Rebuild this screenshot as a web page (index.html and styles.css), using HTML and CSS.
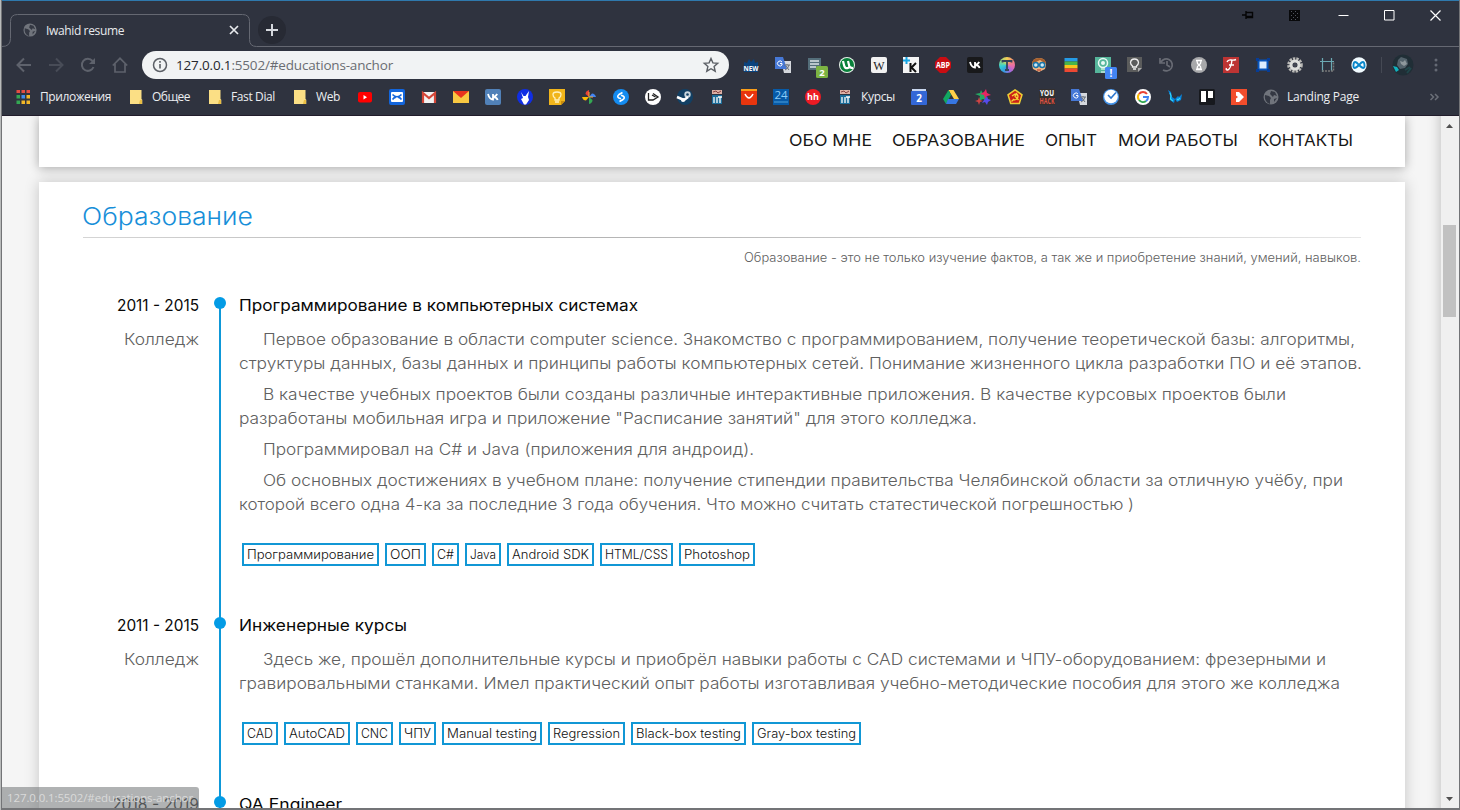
FILE: index.html
```html
<!DOCTYPE html>
<html lang="ru">
<head>
<meta charset="utf-8">
<title>Iwahid resume</title>
<link rel="stylesheet" href="styles.css">
</head>
<body>
<div class="window">
  <header class="chrome">
    <div class="tabstrip">
      <svg class="tabline" width="1457" height="46" viewBox="0 0 1457 46" fill="none" stroke="#656872"><path d="M0 45.500q8.500 0 8.500-8v-17q0-7 7-7h225q7 0 7 7v18q0 7 7 7h1202.500"/></svg>
      <div class="tab">
        <svg width="14" height="14" viewBox="0 0 16 16"><use href="#globe"/></svg>
        <span class="tab-title" data-w="78">Iwahid resume</span>
        <svg width="10" height="10" viewBox="0 0 10 10" stroke="#e8eaed" stroke-width="1.700"><path d="M1 1l8 8M9 1l-8 8"/></svg>
      </div>
      <div class="newtab"><svg width="14" height="14" viewBox="0 0 14 14" stroke="#d5d8dd" stroke-width="2"><path d="M7 1v12M1 7h12"/></svg></div>
      <div class="controls">
        <svg width="12" height="12" viewBox="0 0 12 12" fill="none" stroke="#050506" stroke-width="1.400"><path d="M0 6h4M4 2v8M4 3.500h6.500v5H4M4 7.500h7"/></svg>
        <svg class="grid-icon" width="11" height="11" viewBox="0 0 11 11"><path fill="#08090b" d="M0 0h11v11H0z"/><path d="M2.500 1v9M6.500 1v9" stroke="#50545e" stroke-dasharray="1 3"/><path d="M4.500 3v7M8.500 3v7" stroke="#50545e" stroke-dasharray="1 3"/></svg>
        <svg width="11" height="11" viewBox="0 0 11 11" stroke="#fff"><path d="M.5 5.500h10"/></svg>
        <svg width="11" height="11" viewBox="0 0 11 11" fill="none" stroke="#fff"><path d="M.5.5h9.500v9.500H.5z"/></svg>
        <svg width="11" height="11" viewBox="0 0 11 11" stroke="#fff" stroke-width="1.200"><path d="M.5.5l10 10M10.500.5l-10 10"/></svg>
      </div>
    </div>

    <div class="toolbar">
      <nav class="navbuttons">
        <svg width="16" height="16" viewBox="0 0 16 16" fill="none" stroke="#5e626c" stroke-width="2"><path d="M15 8H2M8 1.500L1.500 8 8 14.500"/></svg>
        <svg width="16" height="16" viewBox="0 0 16 16" fill="none" stroke="#484c57" stroke-width="2"><path d="M1 8h13M8 1.500L14.500 8 8 14.500"/></svg>
        <svg width="16" height="16" viewBox="0 0 16 16" fill="none" stroke="#5e626c" stroke-width="2"><path d="M13.500 10A6 6 0 1 1 12.500 4"/><path d="M15 1v6H9z" fill="#5e626c" stroke="none"/></svg>
        <svg width="16" height="16" viewBox="0 0 16 16" fill="none" stroke="#5e626c" stroke-width="1.700"><path d="M.8 8.500L8 1.300l7.200 7.200M3 7v8h10V7"/></svg>
      </nav>
      <div class="omnibox">
        <svg width="16" height="16" viewBox="0 0 16 16"><circle cx="8" cy="8" r="6.500" fill="none" stroke="#5b5f65" stroke-width="1.500"/><path d="M8 7v4.500M8 4v1.700" stroke="#5b5f65" stroke-width="1.600"/></svg>
        <span class="url" data-w="217"><b>127.0.0.1</b>:5502/#educations-anchor</span>
        <svg width="16" height="16" viewBox="0 0 16 16" fill="none" stroke="#5b5f65" stroke-width="1.400"><path d="M8 1.500l1.900 4.400 4.800.4-3.600 3.200 1.100 4.700L8 11.700l-4.200 2.500 1.100-4.700L1.300 6.300l4.800-.4z"/></svg>
      </div>
      <div class="extensions">
        <svg viewBox="0 0 16 16"><path d="M1 10V5l3 1 2-4 2 3 3-3 1 4 3-1v10H1z" fill="#0b437e"/><text x="8" y="14" font-size="7.500" textLength="15" lengthAdjust="spacingAndGlyphs" class="mini">NEW</text></svg>
        <svg viewBox="0 0 16 16"><use href="#translate"/></svg>
        <svg viewBox="0 0 16 16"><path d="M1 1h13v12H1z" fill="#546e7a"/><path d="M3 4h9M3 7h9M3 10h6" stroke="#dce4e7" stroke-width="1.300"/><rect x="9" y="9" width="12" height="12" rx="1.500" fill="#7cb342"/><text x="15" y="18.500" font-size="9.500" class="mini">2</text></svg>
        <svg viewBox="0 0 16 16"><circle cx="8" cy="8" r="8" fill="#e7f4ea"/><circle cx="8" cy="8" r="7" fill="#08813a"/><path d="M4 4l1 4q.7 4 4 3 2-.7 1-3L9 4M10 9q1 2 4 2" fill="none" stroke="#fff" stroke-width="2.200"/></svg>
        <svg viewBox="0 0 16 16"><rect width="16" height="16" rx="2" fill="#f1f1f1"/><text x="8" y="12.500" font-size="12" class="serif">W</text></svg>
        <svg viewBox="0 0 16 16"><path d="M0 0h16v16H0z" fill="#f4f4f4"/><path d="M0 3.500h7M3.500 0v7" stroke="#17a6e3" stroke-width="2"/><path d="M7.500 6v9M13 6l-4.500 4.500L13 15" fill="none" stroke="#111" stroke-width="2"/></svg>
        <svg viewBox="0 0 16 16"><path d="M5 0h6l5 5v6l-5 5H5l-5-5V5z" fill="#c90d12"/><text x="8" y="11" font-size="8" textLength="14" lengthAdjust="spacingAndGlyphs" class="mini">ABP</text></svg>
        <svg viewBox="0 0 16 16"><rect width="16" height="16" rx="2" fill="#18191b"/><use href="#vk"/></svg>
        <div class="disc"><svg viewBox="0 0 16 16"><path d="M3.500 5.500V4h9v1.500M8 4v9M6 13h4" stroke="#34445a" stroke-width="1.800" fill="none"/></svg></div>
        <svg viewBox="0 0 16 16"><path d="M1 8Q1 1 8 1t7 7l-1 4-6 3-6-3z" fill="#f1b883"/><path d="M1 7Q1 1 8 1t7 6L9 3z" fill="#a55f2d"/><g fill="#cce9f5" stroke="#1975a9" stroke-width="1.500"><circle cx="4.800" cy="8" r="2.500"/><circle cx="11.200" cy="8" r="2.500"/></g><path d="M6 13h4" stroke="#b62820"/></svg>
        <svg viewBox="0 0 16 16"><path fill="#259be6" d="M1.500 1h13v3.500h-13z"/><path fill="#48b549" d="M1.500 4.500h13V8h-13z"/><path fill="#f9c51b" d="M1.500 8h13v3.500h-13z"/><path fill="#ed4833" d="M1.500 11.500h13V15h-13z"/></svg>
        <svg viewBox="0 0 16 16"><path d="M0 0h16v16H0z" fill="#56b69b"/><circle cx="8" cy="6" r="4.500" fill="none" stroke="#e9faf5" stroke-width="1.500"/><circle cx="8" cy="6" r="2" fill="#e9faf5"/><path d="M6 12h4M6 15h4" stroke="#fff"/><rect x="10" y="10" width="12" height="12" rx="1.500" fill="#4285f4"/><text x="16" y="19.500" font-size="10" class="mini">!</text></svg>
        <svg viewBox="0 0 16 16"><path d="M0 0h15v11l-4 4H0z" fill="#5b5c5c"/><path d="M11 15v-4h4z" fill="#aaa"/><path d="M5.500 10V9q-2-1.500-2-3.500Q4 2 7.500 2T11.500 5.500q0 2-2 3.500v1zM6 12h3" fill="none" stroke="#eee" stroke-width="1.300"/></svg>
        <svg viewBox="0 0 16 16" fill="none" stroke="#686b74" stroke-width="1.700"><path d="M2 5A6 6 0 1 1 4 13M8 4v4l3 2M1 1v5h5"/></svg>
        <svg viewBox="0 0 16 16"><circle cx="8" cy="8" r="8" fill="#a8a9ab"/><path d="M5 3.500h6M5 12.500h6M6 4q0 3 2 4-2 1-2 4h4q0-3-2-4 2-1 2-4" fill="none" stroke="#fff" stroke-width="1.300"/></svg>
        <svg viewBox="0 0 16 16"><path d="M0 0h16v16H0z" fill="#bd3433"/><path d="M4 5q1-2.500 4-2t5-.5M9 3q-1 9-4.500 10-2 0-1-2M6 8h5" stroke="#fff" stroke-width="1.400" fill="none"/></svg>
        <svg viewBox="0 0 16 16"><path d="M3.500 3.500h9v9h-9z" fill="#dcecff" stroke="#0755bd" stroke-width="2"/><g fill="#063c96"><path d="M1 1h3v3H1zM12 1h3v3h-3zM1 12h3v3H1zM12 12h3v3h-3z"/></g></svg>
        <svg viewBox="0 0 16 16"><circle cx="8" cy="8" r="6" fill="none" stroke="#b9b9b6" stroke-width="3.600" stroke-dasharray="2.200 1"/><circle cx="8" cy="8" r="4" fill="none" stroke="#dededb" stroke-width="3"/><circle cx="8" cy="8" r="2" fill="#454853"/></svg>
        <svg viewBox="0 0 16 16"><path d="M3.500 1v14M12.500 1v13M1 4.500h14" fill="none" stroke="#6ba9b3" stroke-width="1.200"/><path d="M3 14h11.500V5" stroke="#777" stroke-width="1.500" stroke-dasharray="2 1" fill="none"/></svg>
        <svg viewBox="0 0 16 16"><circle cx="8" cy="8" r="7.700" fill="#f2fbff"/><path d="M8 8q-5-6-5.500 0t5.500 0q5-6 5.500 0T8 8" fill="none" stroke="#0886ca" stroke-width="1.900"/></svg>
      </div>
      <div class="profile"><svg width="22" height="22" viewBox="0 0 22 22"><circle cx="11" cy="11" r="10.500" fill="#202e36"/><path d="M6 6l3-3 6 2 1 5-3 4-5 1-3-4z" fill="#53626b"/><path d="M8 7l3 1 2-2 2 4-3 2-3-2z" fill="#8e989c"/><path d="M1 12l4 1 2 3-3 2z" fill="#10b2bf"/><path d="M13 16l5-3M15 19l4-5" stroke="#20474b" stroke-width="2"/></svg></div>
      <svg class="kebab" width="4" height="14" viewBox="0 0 4 14" fill="#656974"><circle cx="2" cy="2" r="1.500"/><circle cx="2" cy="7" r="1.500"/><circle cx="2" cy="12" r="1.500"/></svg>
    </div>

    <div class="bookmarks">
      <svg viewBox="0 0 16 16"><path fill="#e54d42" d="M1.500 1h3.500v3H1.500zM6.500 1h3.500v3H6.500zM11.500 1h3.500v3h-3.500z"/><path fill="#34a853" d="M1.500 6h3.500v3.500H1.500zM1.500 11.500h3.500v3.500H1.500z"/><path fill="#408bee" d="M6.500 6h3.500v3.500H6.500z"/><path fill="#f2b728" d="M11.500 6h3.500v3.500h-3.500zM6.500 11.500h3.500v3.500H6.500zM11.500 11.500h3.500v3.500h-3.500z"/></svg>
      <span class="bm w71" data-w="71">Приложения</span>
      <svg viewBox="0 0 16 16"><use href="#folder"/></svg><span class="bm w38" data-w="38">Общее</span>
      <svg viewBox="0 0 16 16"><use href="#folder"/></svg><span class="bm w44" data-w="44">Fast Dial</span>
      <svg viewBox="0 0 16 16"><use href="#folder"/></svg><span class="bm w24" data-w="24">Web</span>
      <div class="icon-run">
        <svg viewBox="0 0 16 16"><rect x="1" y="3" width="14" height="10.500" rx="2" fill="#f00"/><path d="M6.500 6v4.500l3.500-2.200z" fill="#fff"/></svg>
        <svg viewBox="0 0 16 16"><rect width="16" height="16" rx="2" fill="#1265dc"/><rect x="2" y="3" width="12" height="10" rx="1" fill="#fff"/><path d="M3.500 5.500q4.500 4.500 9 0M3.500 10.500q2-2.500 3.500-2M12.500 10.500q-2-2.500-3.500-2" fill="none" stroke="#1265dc" stroke-width="1.600"/></svg>
        <svg viewBox="0 0 16 16"><path d="M1 3h14v11H1z" fill="#f2f2f2"/><path d="M2 14V4l6 5 6-5v10" fill="none" stroke="#d44638" stroke-width="2.200"/></svg>
        <svg viewBox="0 0 16 16"><path d="M0 2h16v12H0z" fill="#f8c842"/><path d="M0 2h16L8 9z" fill="#e7321e"/></svg>
        <svg viewBox="0 0 16 16"><rect width="16" height="16" rx="2" fill="#5181b8"/><use href="#vk"/></svg>
        <svg viewBox="0 0 16 16"><circle cx="8" cy="8" r="8" fill="#102ee4"/><path d="M4 3l2.500 4h2L12 2l-1 6 1 3-3 4.500H7L4 10l2-1z" fill="#fff"/></svg>
        <svg viewBox="0 0 16 16"><path d="M0 0h16v12l-4 4H0z" fill="#f1b51b"/><path d="M12 16v-4h4z" fill="#c98b0c"/><path d="M6 11V9Q4 8 4 5.500T8 3t4 2.500T10 9v2zM6 13h4" fill="none" stroke="#fff1bd" stroke-width="1.300"/></svg>
        <svg viewBox="0 0 16 16"><path d="M8 8V1q-3.500 1-3.500 4z" fill="#e94335"/><path d="M8 8h7q-1-3.500-4-3.500z" fill="#4285f4"/><path d="M8 8v7q3.500-1 3.500-4z" fill="#34a853"/><path d="M8 8H1q1 3.500 4 3.500z" fill="#fbbc05"/><path d="M8 3v5h4" fill="none" stroke="#f5a93b"/></svg>
        <svg viewBox="0 0 16 16"><circle cx="8" cy="8" r="8" fill="#148cf1"/><path d="M9.500 3.500L6 5.500Q3.500 7.500 6 9l2 .8M6.500 12.500l3.500-2Q12.500 8.500 10 7L8 6.200" fill="none" stroke="#fff" stroke-width="1.600"/></svg>
        <svg viewBox="0 0 16 16"><circle cx="8" cy="8" r="8" fill="#fff"/><path d="M3.500 4v7H8l5-3-5-3.500M7 6l3.500 2" fill="none" stroke="#222" stroke-width="1.300"/></svg>
        <svg viewBox="0 0 16 16"><circle cx="8" cy="8" r="8" fill="#124064"/><circle cx="10.500" cy="5.500" r="3.200" fill="#c9d5dd"/><circle cx="10.500" cy="5.500" r="1.300" fill="#124064"/><path d="M0 8l7 3 4-3" fill="none" stroke="#fff" stroke-width="2.500"/><circle cx="6" cy="11" r="2" fill="#fff"/></svg>
        <svg viewBox="0 0 16 16"><use href="#iit"/></svg>
        <svg viewBox="0 0 16 16"><rect width="16" height="16" rx="1.500" fill="#e8350e"/><path d="M0 0h16v2H0z" fill="#fb9e19"/><path d="M4 5q4 8 8 0" fill="none" stroke="#fff" stroke-width="1.500"/></svg>
        <svg viewBox="0 0 16 16"><path d="M0 0h16v16H0z" fill="#075aa7"/><text x="8" y="10" font-size="11.500" class="mini light">24</text><path d="M1 13h14" stroke="#4fa0db"/></svg>
        <svg viewBox="0 0 16 16"><circle cx="8" cy="8" r="8" fill="#ed1b24"/><text x="8" y="11.300" font-size="9" class="mini">hh</text></svg>
        <svg viewBox="0 0 16 16"><use href="#iit"/></svg>
      </div>
      <span class="bm w34" data-w="34">Курсы</span>
      <div class="icon-run">
        <svg viewBox="0 0 16 16"><path d="M1 0h14v3H1z" fill="#c9d7ef"/><rect y="2" width="16" height="14" rx="1" fill="#3367d6"/><text x="8" y="13" font-size="10" class="mini">2</text></svg>
        <svg viewBox="0 0 16 16"><path d="M5.500 1h5L16 10h-5z" fill="#ffcf48"/><path d="M5.500 1L8 6l-5 9-3-5z" fill="#11a861"/><path d="M5 10h11l-3 5H3z" fill="#3777e3"/></svg>
        <svg viewBox="0 0 16 16"><path d="M6 1l2 4 5-1-3 4 2 4-4-2-4 2 1-5-5-2 5-1z" fill="#24aa63"/><path d="M11 0l1 4 4 2-4 1-2 3-1-4-4-1 4-2z" fill="#e72662"/><path d="M12 7l1 3 3 1-3 2-1 3-2-3-3 1 2-3z" fill="#554bea"/><path d="M4 8l1 3 3 1-3 1-1 3-1-3-3-1 3-1z" fill="#d04444"/></svg>
        <svg viewBox="0 0 16 16"><path d="M8 .8l7 5-2.700 8.700H3.700L1 5.800z" fill="#cc2017" stroke="#edcf34" stroke-width="1.500"/><path d="M4.500 12.500l2-2M5 7l3-2 1 1-1 1 3.500 4M9 4q4 4 0 6.500-2 .8-3-.5" fill="none" stroke="#f8d637" stroke-width="1.300"/></svg>
        <svg viewBox="0 0 16 16"><path d="M0 0h16v16H0z" fill="#34302f"/><text x="8" y="7" font-size="8" textLength="14" lengthAdjust="spacingAndGlyphs" class="mini">YOU</text><text x="8" y="15" font-size="8" textLength="15" lengthAdjust="spacingAndGlyphs" class="mini red">HACK</text></svg>
        <svg viewBox="0 0 16 16"><use href="#translate"/></svg>
        <svg viewBox="0 0 16 16"><circle cx="8" cy="8" r="8" fill="#4594e9"/><circle cx="8" cy="7.500" r="6.800" fill="#fff"/><path d="M5 6l3 3 5-5.500" fill="none" stroke="#2c77cf" stroke-width="1.600"/></svg>
        <svg viewBox="0 0 16 16"><circle cx="8" cy="8" r="8" fill="#fff"/><path d="M12 5A5 5 0 0 0 4 5" fill="none" stroke="#ea4335" stroke-width="2"/><path d="M4 5a5 5 0 0 0 0 6" fill="none" stroke="#fbbc05" stroke-width="2"/><path d="M4 11a5 5 0 0 0 7 1" fill="none" stroke="#34a853" stroke-width="2"/><path d="M8 8h5q0 3-2 4" fill="none" stroke="#4285f4" stroke-width="2"/></svg>
        <svg viewBox="0 0 16 16"><path d="M1 1l3 2 1 5 3 2-1 4-4-3v-5zM8 10l3-3 1 1 3-3-1 6-4 2z" fill="#0784dc"/><path d="M3 4l1 3-.5 3L6 12M10 10l1 1 2-2" fill="none" stroke="#34d5f6" stroke-width="1.200"/></svg>
        <svg viewBox="0 0 16 16"><rect width="16" height="16" rx="1.500" fill="#17191e"/><path d="M2 2h5v11H2zM9 2h5v7H9z" fill="#fff"/></svg>
        <svg viewBox="0 0 16 16"><path d="M0 0h16v16H0z" fill="#f24d2c"/><path d="M5 3h3l5 5-5 5H5V9.500L7 8 5 6.500z" fill="#fff"/></svg>
        <svg viewBox="0 0 16 16"><use href="#globe"/></svg>
      </div>
      <span class="bm w72" data-w="72">Landing Page</span>
      <svg class="more" viewBox="0 0 16 16" fill="none" stroke="#6b6f78" stroke-width="1.500"><path d="M4.500 5l3 3-3 3M9 5l3 3-3 3"/></svg>
    </div>
  </header>

  <div class="viewport">
    <main class="page">
      <nav class="sitenav sheet">
        <a data-w="83">ОБО МНЕ</a><a data-w="133">ОБРАЗОВАНИЕ</a><a data-w="52">ОПЫТ</a><a data-w="120">МОИ РАБОТЫ</a><a data-w="95">КОНТАКТЫ</a>
      </nav>
      <section class="education sheet">
        <h1><span data-w="171">Образование</span></h1>
        <p class="motto"><span data-w="617">Образование - это не только изучение фактов, а так же и приобретение знаний, умений, навыков.</span></p>

        <article class="entry">
          <aside><h2><span data-w="82">2011 - 2015</span></h2><p><span data-w="75">Колледж</span></p></aside>
          <div class="rail"></div>
          <div class="story">
            <h2><span data-w="399">Программирование в компьютерных системах</span></h2>
            <p><span data-w="1092">Первое образование в области computer science. Знакомство с программированием, получение теоретической базы: алгоритмы,</span><br><span data-w="1123">структуры данных, базы данных и принципы работы компьютерных сетей. Понимание жизненного цикла разработки ПО и её этапов.</span></p>
            <p><span data-w="1023">В качестве учебных проектов были созданы различные интерактивные приложения. В качестве курсовых проектов были</span><br><span data-w="738">разработаны мобильная игра и приложение "Расписание занятий" для этого колледжа.</span></p>
            <p><span data-w="491">Программировал на C# и Java (приложения для андроид).</span></p>
            <p><span data-w="1080">Об основных достижениях в учебном плане: получение стипендии правительства Челябинской области за отличную учёбу, при</span><br><span data-w="895">которой всего одна 4-ка за последние 3 года обучения. Что можно считать статестической погрешностью )</span></p>
            <div class="tags"><b><span data-w="127">Программирование</span></b><b><span data-w="31">ООП</span></b><b><span data-w="17">C#</span></b><b><span data-w="26">Java</span></b><b><span data-w="77">Android SDK</span></b><b><span data-w="63">HTML/CSS</span></b><b><span data-w="66">Photoshop</span></b></div>
          </div>
        </article>

        <article class="entry">
          <aside><h2><span data-w="82">2011 - 2015</span></h2><p><span data-w="75">Колледж</span></p></aside>
          <div class="rail"></div>
          <div class="story">
            <h2><span data-w="168">Инженерные курсы</span></h2>
            <p><span data-w="1063">Здесь же, прошёл дополнительные курсы и приобрёл навыки работы с CAD системами и ЧПУ-оборудованием: фрезерными и</span><br><span data-w="1101">гравировальными станками. Имел практический опыт работы изготавливая учебно-методические пособия для этого же колледжа</span></p>
            <div class="tags"><b><span data-w="26">CAD</span></b><b><span data-w="56">AutoCAD</span></b><b><span data-w="27">CNC</span></b><b><span data-w="27">ЧПУ</span></b><b><span data-w="90">Manual testing</span></b><b><span data-w="67">Regression</span></b><b><span data-w="105">Black-box testing</span></b><b><span data-w="99">Gray-box testing</span></b></div>
          </div>
        </article>

        <article class="entry">
          <aside><h2><span data-w="87">2018 - 2019</span></h2></aside>
          <div class="rail"></div>
          <div class="story"><h2><span data-w="103">QA Engineer</span></h2></div>
        </article>
      </section>
    </main>
    <div class="scrollbar">
      <svg width="7" height="4" viewBox="0 0 7 4"><path d="M0 4l3.500-4L7 4z" fill="#505050"/></svg>
      <div class="thumb"></div>
      <svg class="down" width="7" height="4" viewBox="0 0 7 4"><path d="M0 0h7L3.500 4z" fill="#505050"/></svg>
    </div>
    <div class="status"><span data-w="186">127.0.0.1:5502/#educations-anchor</span></div>
  </div>
</div>

<svg class="defs" width="0" height="0">
  <symbol id="globe" viewBox="0 0 16 16"><circle cx="8" cy="8" r="7.500" fill="#70747c"/><path d="M2 6l4 1 2 2-1 2v4q-6-2-5-9M8 2l4 1 2 4-3-1-1 2-3-3zM11 10l3-1-3 4z" fill="#343843"/></symbol>
  <symbol id="folder" viewBox="0 0 16 16"><path d="M2 1h11.500v9l.8.800V15H2z" fill="#fbdf85"/><path d="M12 11h2v4h-3z" fill="#eabf45"/></symbol>
  <symbol id="translate" viewBox="0 0 16 16"><path d="M6 4h10v12H9z" fill="#d5d8dd"/><path d="M0 0h8l4 12H0z" fill="#4678d6"/><path d="M7 5A2.500 2.500 0 1 0 7 8V6.500H5" fill="none" stroke="#fff"/><path d="M9 8h6M12 7v1M14 8q-1 4-4 5M11 9l3 4" fill="none" stroke="#697078"/></symbol>
  <symbol id="vk" viewBox="0 0 16 16"><path d="M3 5q1.500 5.500 5 5.500V5M8 8q3-.5 4.200-3M8 8q3.500 0 4.700 3" fill="none" stroke="#fff" stroke-width="1.800"/></symbol>
  <symbol id="iit" viewBox="0 0 16 16"><path d="M3 1h10v4H3z" fill="#dcb0a5"/><path d="M4 3l3-1 2 2 3-2" stroke="#8a4240" fill="none"/><path d="M3 6h10v9H3z" fill="#1b6d9a"/><path d="M5 8v6M8 8v6M11 8v6M9 8h4" stroke="#fff" stroke-width="1.300"/></symbol>
</svg>
<script src="fit.js"></script>
</body>
</html>
```

FILE: styles.css
```css
* { box-sizing: border-box; }
body { margin: 0; width: 1460px; height: 810px; overflow: hidden; background: #b9bbbb; font-family: "Open Sans", "Noto Sans", sans-serif; }
svg { display: block; flex: none; overflow: visible; }
.defs { height: 0; }
[data-w] { display: inline-block; white-space: nowrap; flex: none; transform-origin: 0 50%; }
.window { width: 1457px; height: 809px; margin-left: 2px; outline: 1px solid #737477; border-bottom: 1px solid #737477; overflow: hidden; }
.chrome { height: 116px; background: #2f333f; border-top: 1px solid #2f79ad; border-bottom: 1px solid #211c2b; }
.tabstrip { height: 45px; display: flex; position: relative; }
.tabline { position: absolute; left: 0; top: 0; }
.tab { width: 248px; padding: 13px 11px 0 21px; height: 45px; display: flex; align-items: center; }
.tab-title { margin-left: 9px; font-size: 12px; color: #e8eaed; }
.tab > svg:last-child { margin-left: auto; }
.newtab { width: 28px; height: 28px; margin: 15px 0 0 8px; border-radius: 50%; background: #272a34; display: flex; align-items: center; justify-content: center; }
.controls { margin-left: auto; height: 28px; padding-right: 18px; display: flex; align-items: center; gap: 35px; }
.grid-icon { margin-right: 3px; }
.toolbar { height: 37px; display: flex; align-items: center; padding-left: 14px; }
.navbuttons { display: flex; gap: 16px; }
.omnibox { width: 587px; height: 28px; margin: 1px 0 0 14px; border-radius: 14px; background: #f1f3f4; padding: 0 10px; display: flex; align-items: center; }
.url { margin-left: 8px; font-size: 13.500px; line-height: 18px; color: #6a6d72; }
.url b { font-weight: 400; color: #26282d; }
.omnibox > svg:last-child { margin-left: auto; }
.extensions { display: flex; gap: 16px; margin-left: 14px; }
.extensions svg, .bookmarks svg { width: 16px; height: 16px; }
.disc { width: 16px; height: 16px; border-radius: 50%; background: conic-gradient(#f6cf53, #f08a76, #e76bae, #9b6be0, #359be2, #32cfd4, #9bd67c, #f6cf53); }
.mini { font-family: "Open Sans", sans-serif; font-weight: 700; fill: #fff; text-anchor: middle; }
.mini.light { font-weight: 400; fill: #8dccf6; }
.mini.red { fill: #df5143; }
.serif { font-family: "Liberation Serif", serif; text-anchor: middle; fill: #202020; }
.profile { border-left: 1px solid #454954; margin-left: 14px; padding-left: 10px; height: 16px; display: flex; align-items: center; }
.kebab { margin-left: 20px; }
.bookmarks { height: 28px; display: flex; align-items: center; padding-left: 13px; }
.bm { font-size: 12px; line-height: 18px; color: #eceef1; margin: 0 17px 0 8px; }
.w71 { margin-left: 9px; }
.w34 { margin-right: 16px; }
.icon-run { display: flex; gap: 16px; }
.more { margin-left: auto; margin-right: 17px; }
.viewport { position: relative; height: 692px; display: flex; background: #f5f5f5; overflow: hidden; }
.page { width: 1439px; height: 692px; padding: 0 36px 0 37px; overflow: hidden; box-shadow: inset -12px 0 12px -10px #c6c6c6; font-family: Inter, "Open Sans", sans-serif; }
.sheet { background: #fff; box-shadow: 0 0 14px rgba(0, 0, 0, .2); }
.sitenav { height: 51px; padding: 0 52px 3px 0; display: flex; justify-content: flex-end; align-items: center; gap: 20.300px; font-size: 16.500px; font-weight: 400; color: #181818; }
.sitenav { box-shadow: 0 1px 10px rgba(0, 0, 0, .32); position: relative; }
.education { height: 720px; margin-top: 15px; padding: 18px 44px 0; }
h1, h2, p { margin: 0; }
h1 { height: 38px; line-height: 34px; font-size: 24px; font-weight: 300; color: #188fd9; border-bottom: 1px solid; border-image: linear-gradient(90deg, #d5d5d5, #b0b0b0 35%, #e5e5e5) 1; }
h1 span { margin-left: -1px; }
.motto { height: 55px; padding-top: 9px; line-height: 22px; font-size: 12.500px; font-weight: 300; color: #606060; text-align: right; }
.entry { display: flex; }
aside { flex: none; width: 116px; padding-top: 1px; text-align: right; font-size: 15.800px; line-height: 24px; }
aside p, .story p { color: #606060; font-weight: 300; }
aside p { margin-top: 10px; }
h2 { font-size: 15.800px; line-height: 24px; height: 24px; font-weight: 400; color: #080808; }
.rail { flex: none; width: 2px; margin: 10px 18px -10px 20px; background: #0e98d8; }
.rail::before { content: ""; display: block; width: 12px; height: 12px; margin: -6px 0 0 -5px; border-radius: 50%; background: #039be5; }
.story { padding: 1px 0 47px; font-size: 15.800px; line-height: 24px; white-space: nowrap; }
.story p { text-indent: 24px; margin-top: 7px; }
.story p span { text-indent: 0; vertical-align: top; }
.story h2 + p { margin-top: 10px; }
.tags { display: flex; gap: 6px; margin: 26px 0 0 3px; }
.tags b { height: 23px; border: 2px solid #1197d5; padding: 0 3px; font-size: 12.500px; line-height: 19px; font-weight: 300; color: #111; }
.scrollbar { width: 18px; background: #f0f0f0; display: flex; flex-direction: column; align-items: center; padding: 8px 2px 7px 1px; }
.thumb { width: 13px; height: 92px; margin-top: 97px; background: #c1c1c1; }
.down { margin-top: auto; }
.status { position: absolute; left: 0; bottom: 0; width: 197px; height: 21px; border-radius: 0 3px 0 0; background: rgba(128, 130, 132, .62); padding-left: 5px; font-size: 11.500px; line-height: 21px; color: #dadada; }
```

FILE: fit.js
```js
// Sets each label to its intended measure: page copy is widened, browser labels are tracked.
document.querySelectorAll('[data-w]').forEach(function (el) {
  var target = Number(el.dataset.w);
  var natural = el.getBoundingClientRect().width;
  if (el.closest('.page')) {
    el.style.transform = 'scaleX(' + target / natural + ')';
    el.style.marginRight = (target - natural) + 'px';
  } else {
    el.style.letterSpacing = ((target - natural) / el.textContent.length) + 'px';
    el.style.width = target + 'px';
  }
});
```
